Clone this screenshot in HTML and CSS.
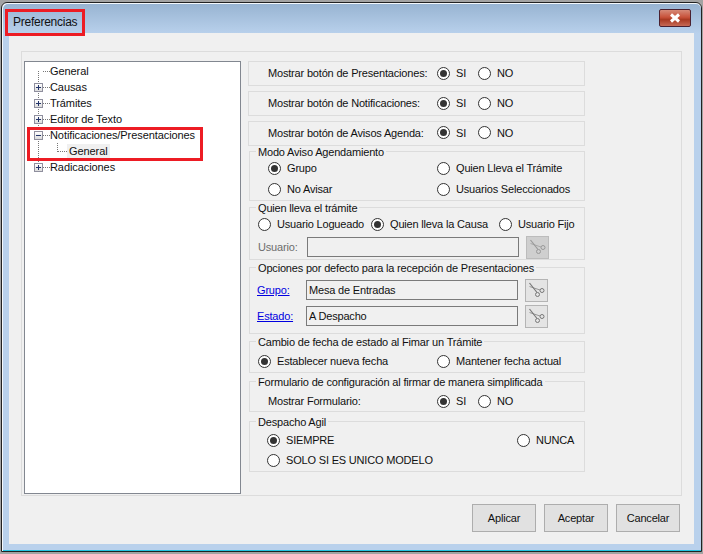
FILE: index.html
```html
<!DOCTYPE html>
<html lang="es">
<head>
<meta charset="utf-8">
<title>Preferencias</title>
<link rel="stylesheet" href="styles.css">
</head>
<body>
<svg class="defs" width="0" height="0" aria-hidden="true">
  <symbol id="scissors" viewBox="0 0 21 21">
    <path d="M3.5 3 L11 12.5" fill="none" stroke="currentColor" stroke-width="1.2"/>
    <path d="M3.5 6.5 L14 10" fill="none" stroke="currentColor" stroke-width="1" opacity=".7"/>
    <circle cx="16" cy="10.5" r="2" fill="none" stroke="currentColor" stroke-width="1"/>
    <circle cx="11.5" cy="14.5" r="2" fill="none" stroke="currentColor" stroke-width="1"/>
  </symbol>
</svg>
<div class="window">
  <div class="frame">
    <header class="titlebar">
      <span class="title">Preferencias</span>
      <button class="close" aria-label="Cerrar">
        <svg width="14" height="10" viewBox="0 0 14 10"><path d="M3 1.5 L11 8.5 M11 1.5 L3 8.5" stroke="#fff" stroke-width="3" fill="none"/></svg>
      </button>
    </header>
    <div class="client">
      <div class="panel">
        <nav class="tree">
          <div class="node"><span class="noexp"></span><span class="dash"></span><span class="text">General</span></div>
          <div class="node"><span class="exp plus"></span><span class="dash"></span><span class="text">Causas</span></div>
          <div class="node"><span class="exp plus"></span><span class="dash"></span><span class="text">Trámites</span></div>
          <div class="node"><span class="exp plus"></span><span class="dash"></span><span class="text">Editor de Texto</span></div>
          <div class="node"><span class="exp"></span><span class="dash"></span><span class="text">Notificaciones/Presentaciones</span></div>
          <div class="node child"><span class="elbow"></span><span class="text selected">General</span></div>
          <div class="node"><span class="exp plus"></span><span class="dash"></span><span class="text">Radicaciones</span></div>
        </nav>
        <div class="settings">
          <div class="box">
            <span>Mostrar botón de Presentaciones:</span>
            <label class="opt"><i class="radio on"></i>SI</label>
            <label class="opt"><i class="radio"></i>NO</label>
          </div>
          <div class="box">
            <span>Mostrar botón de Notificaciones:</span>
            <label class="opt"><i class="radio on"></i>SI</label>
            <label class="opt"><i class="radio"></i>NO</label>
          </div>
          <div class="box">
            <span>Mostrar botón de Avisos Agenda:</span>
            <label class="opt"><i class="radio on"></i>SI</label>
            <label class="opt"><i class="radio"></i>NO</label>
          </div>

          <fieldset class="group modo">
            <legend>Modo Aviso Agendamiento</legend>
            <div class="row">
              <label class="opt"><i class="radio on"></i>Grupo</label>
              <label class="opt"><i class="radio"></i>Quien Lleva el Trámite</label>
            </div>
            <div class="row">
              <label class="opt"><i class="radio"></i>No Avisar</label>
              <label class="opt"><i class="radio"></i>Usuarios Seleccionados</label>
            </div>
          </fieldset>

          <fieldset class="group quien">
            <legend>Quien lleva el trámite</legend>
            <div class="row">
              <label class="opt"><i class="radio"></i>Usuario Logueado</label>
              <label class="opt"><i class="radio on"></i>Quien lleva la Causa</label>
              <label class="opt"><i class="radio"></i>Usuario Fijo</label>
            </div>
            <div class="field">
              <span class="disabled">Usuario:</span>
              <input class="input" type="text" disabled>
              <button class="pick off"><svg width="21" height="21"><use href="#scissors"/></svg></button>
            </div>
          </fieldset>

          <fieldset class="group opciones">
            <legend>Opciones por defecto para la recepción de Presentaciones</legend>
            <div class="field">
              <a class="link" href="#">Grupo:</a>
              <input class="input" type="text" value="Mesa de Entradas" readonly>
              <button class="pick"><svg width="21" height="21"><use href="#scissors"/></svg></button>
            </div>
            <div class="field">
              <a class="link" href="#">Estado:</a>
              <input class="input" type="text" value="A Despacho" readonly>
              <button class="pick"><svg width="21" height="21"><use href="#scissors"/></svg></button>
            </div>
          </fieldset>

          <fieldset class="group cambio">
            <legend>Cambio de fecha de estado al Fimar un Trámite</legend>
            <div class="row">
              <label class="opt"><i class="radio on"></i>Establecer nueva fecha</label>
              <label class="opt"><i class="radio"></i>Mantener fecha actual</label>
            </div>
          </fieldset>

          <fieldset class="group formulario">
            <legend>Formulario de configuración al firmar de manera simplificada</legend>
            <div class="row">
              <span>Mostrar Formulario:</span>
              <label class="opt"><i class="radio on"></i>SI</label>
              <label class="opt"><i class="radio"></i>NO</label>
            </div>
          </fieldset>

          <fieldset class="group despacho">
            <legend>Despacho Agil</legend>
            <div class="row">
              <label class="opt"><i class="radio on"></i>SIEMPRE</label>
              <label class="opt"><i class="radio"></i>NUNCA</label>
            </div>
            <div class="row">
              <label class="opt"><i class="radio"></i>SOLO SI ES UNICO MODELO</label>
            </div>
          </fieldset>
        </div>
      </div>
      <footer class="actions">
        <button class="btn">Aplicar</button>
        <button class="btn">Aceptar</button>
        <button class="btn">Cancelar</button>
      </footer>
    </div>
  </div>
</div>
<div class="mark mark-title"></div>
<div class="mark mark-tree"></div>
</body>
</html>
```
FILE: styles.css
```css
* { box-sizing: border-box; }
html, body { margin: 0; height: 100%; }
body {
  background: #a3a3a3;
  padding: 2px 1px 2px 1px;
  font: 11px/14px "Liberation Sans", Arial, sans-serif;
  letter-spacing: -0.18px;
  color: #111;
  position: relative;
  overflow: hidden;
}
.defs { position: absolute; }
.window {
  height: 550px;
  border: 1px solid #222;
  border-radius: 6px 6px 0 0;
  background: #f4f8fc;
  padding: 1px 0 0 1px;
}
.frame {
  height: 100%;
  display: flex;
  flex-direction: column;
  border-radius: 5px 5px 0 0;
  background: linear-gradient(#98b4d2 0, #b9d1ec 30px);
  border-bottom: 1px solid #25c3e0;
  padding: 0 7px 6px 6px;
}
.titlebar {
  height: 29px;
  flex: none;
  display: flex;
  align-items: center;
  justify-content: space-between;
  padding: 3px 3px 0 4px;
}
.title { font-size: 12px; letter-spacing: -0.25px; color: #111; position: relative; top: 2px; }
.close {
  width: 32px;
  height: 18px;
  padding: 0;
  margin-top: -4px;
  border: 1px solid #4a2030;
  border-radius: 2px;
  background: linear-gradient(#d68a78 0, #c8523a 45%, #a93a22 60%, #c66a55 100%);
  display: flex;
  align-items: center;
  justify-content: center;
}
.client {
  flex: 1;
  background: #f0f0f0;
  padding: 18px 12px 0 12px;
  display: flex;
  flex-direction: column;
}
.panel {
  height: 445px;
  flex: none;
  border: 1px solid #dcdcdc;
  padding: 9px 0 0 2px;
  display: flex;
  gap: 7px;
}
.tree {
  width: 217px;
  height: 433px;
  flex: none;
  background: #fff;
  border: 1px solid #828790;
  padding: 1px 0 0 9px;
  position: relative;
  letter-spacing: -0.08px;
}
.tree::before {
  content: "";
  position: absolute;
  left: 13px;
  top: 9px;
  height: 97px;
  border-left: 1px dotted #777;
}
.node {
  height: 16px;
  display: flex;
  align-items: center;
  position: relative;
  white-space: nowrap;
}
.exp, .noexp { width: 9px; height: 9px; flex: none; position: relative; }
.exp {
  border: 1px solid #8f8f9e;
  background: linear-gradient(#fff, #dcdcdc);
}
.exp::before {
  content: "";
  position: absolute;
  left: 1px; top: 3px;
  width: 5px; height: 1px;
  background: #23346a;
}
.plus::after {
  content: "";
  position: absolute;
  left: 3px; top: 1px;
  width: 1px; height: 5px;
  background: #23346a;
}
.dash {
  width: 7px;
  flex: none;
  border-top: 1px dotted #777;
}
.child { padding-left: 23px; }
.elbow {
  width: 10px;
  height: 9px;
  flex: none;
  margin-top: -8px;
  border-left: 1px dotted #777;
  border-bottom: 1px dotted #777;
  margin-right: 2px;
}
.selected { background: #f0f0f0; margin-left: -2px; padding: 0 2px; height: 14px; }
.settings {
  width: 337px;
  flex: none;
}
.box {
  height: 25px;
  margin-bottom: 5px;
  border: 1px solid #dcdcdc;
  padding: 0 0 1px 19px;
  display: grid;
  grid-template-columns: 169px 41px 1fr;
  align-items: center;
  white-space: nowrap;
}
.box:nth-child(3) { margin-bottom: -1px; padding-bottom: 2px; }
.opt {
  display: flex;
  align-items: center;
  gap: 6px;
  white-space: nowrap;
}
.radio {
  width: 13px;
  height: 13px;
  flex: none;
  border: 1px solid #333;
  border-radius: 50%;
  background: #fff;
  position: relative;
}
.radio.on::after {
  content: "";
  position: absolute;
  left: 2px; top: 2px;
  width: 7px; height: 7px;
  border-radius: 50%;
  background: #333;
}
.group {
  margin: 0 0 0 1px;
  padding: 0;
  min-width: 0;
  width: 336px;
  border: 1px solid #dcdcdc;
}
.group legend {
  height: 13px;
  line-height: 15px;
  padding: 0 2px;
  margin-left: 6px;
  white-space: nowrap;
}
.row {
  height: 20px;
  display: grid;
  align-items: center;
}
.modo { height: 56px; }
.modo .row { padding-left: 18px; grid-template-columns: 169px 1fr; }
.modo .row + .row { margin-top: 1px; }
.quien { height: 59px; }
.quien .row { padding-left: 8px; grid-template-columns: 113px 128px 1fr; }
.quien .field { margin-top: 1px; padding-left: 8px; }
.opciones { height: 73px; margin-top: 1px; padding-top: 4px; }
.opciones .field + .field { margin-top: 2px; }
.cambio { height: 38px; margin-top: 1px; padding-top: 3px; }
.cambio .row { padding-left: 8px; grid-template-columns: 179px 1fr; }
.formulario { height: 37px; margin-top: 2px; padding-top: 3px; }
.formulario .row { padding-left: 18px; grid-template-columns: 169px 41px 1fr; }
.despacho { height: 57px; margin-top: 3px; padding-top: 2px; }
.despacho .row { padding-left: 17px; grid-template-columns: 250px 1fr; }
.field {
  height: 24px;
  display: grid;
  grid-template-columns: 49px 212px 30px;
  align-items: center;
  padding-left: 7px;
}
.input {
  width: 212px;
  height: 20px;
  border: 1px solid #7a7a7a;
  background: #f0f0f0;
  font: inherit;
  letter-spacing: inherit;
  color: #111;
  padding: 0 2px;
  outline: none;
}
.pick {
  width: 23px;
  height: 23px;
  padding: 0;
  margin-left: 7px;
  border: 1px solid #b4b4b4;
  background: #e4e4e4;
  color: #777;
  display: flex;
  align-items: center;
  justify-content: center;
}
.pick.off { background: #cfcfcf; color: #999; border-color: #bcbcbc; }
.disabled { color: #6d6d6d; }
.link { color: #0000e0; text-decoration: underline; }
.actions {
  display: flex;
  justify-content: flex-end;
  gap: 8px;
  padding: 8px 2px 0 0;
}
.btn {
  width: 64px;
  height: 28px;
  padding: 0;
  border: 1px solid #adadad;
  background: #e1e1e1;
  font: inherit;
  letter-spacing: inherit;
  color: #111;
}
.mark {
  position: absolute;
  border: 3px solid #ed1c24;
  pointer-events: none;
}
.mark-title { left: 5px; top: 9px; width: 80px; height: 27px; }
.mark-tree { left: 27px; top: 127px; width: 176px; height: 34px; }
```
